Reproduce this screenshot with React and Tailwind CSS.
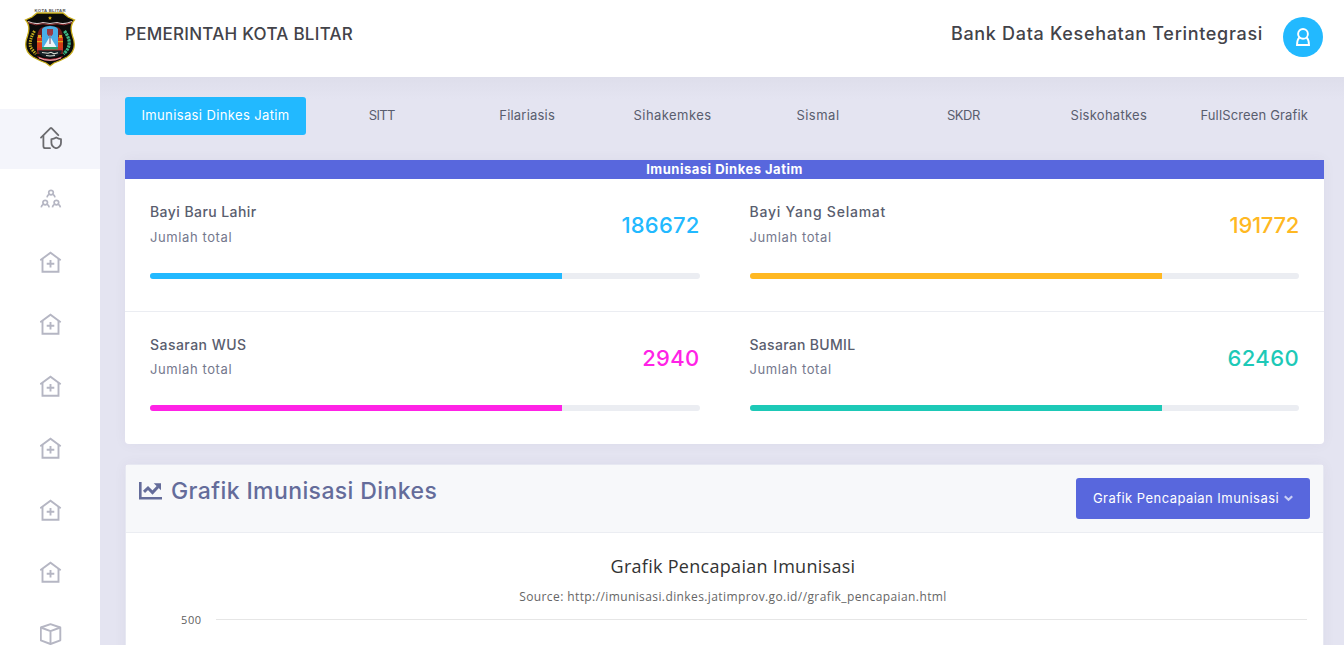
import React from 'react';

const HEADING = "font-['Inter',sans-serif]";

function Logo() {
  return (
    <svg viewBox="0 0 52 60" className="h-[60px] w-[52px]">
      <text x="26" y="3.800" textAnchor="middle" fontFamily="Liberation Sans, sans-serif" fontWeight="700" fontSize="4.3" fill="#555" textLength="31">KOTA BLITAR</text>
      <path d="M13 5 H39 L44 9 L50.500 12 Q45 18 48.500 28 Q54 42 43 49 Q36 53 30 55 L26 58 L22 55 Q16 53 9 49 Q-2 42 3.500 28 Q7 18 1.500 12 L8 9Z" fill="#0b0b0b" stroke="#c9ae1c" strokeWidth="1.300" />
      <path d="M26 8l.6 1.200 1.300.2-.9 1 .2 1.300-1.200-.6-1.200.6.2-1.300-.9-1 1.300-.2z" fill="#e0b414" />
      <path d="M4 13.500 Q12 17 19 14.500 L26 15.500 33 14.500 Q40 17 48 13.500" fill="none" stroke="#d9c9ca" strokeWidth="1.200" />
      <path d="M4 14.800 Q12 18.300 19 15.800 L26 16.800 33 15.800 Q40 18.300 48 14.800" fill="none" stroke="#b03a40" strokeWidth=".8" />
      <path d="M13 46V29q1-9 6-10h14q5 1 6 10v17z" fill="#6e1a1a" />
      <path d="M18 42V21q2-3 8-3t8 3v21z" fill="#4aaee6" />
      <path d="M19 40l6-10h2l6 10z" fill="#eef5f8" />
      <path d="M23 21h6v5l-1.500 2h-3L23 26z" fill="#9c3a43" />
      <path d="M25.300 27h1.400v9h-1.400z" fill="#8a7c96" />
      <path d="M13 29h5v11h-5zM34 29h5v11h-5z" fill="#d23c18" />
      <path d="M14 27h3v3h-3zM35 27h3v3h-3zM13 33h5v1.300h-5zM34 33h5v1.300h-5z" fill="#e2a51b" />
      <path d="M13 40h26v2.500H13z" fill="#c9322b" />
      <path d="M18 39h16v2.500H18z" fill="#2c9a68" />
      <path d="M14 42.500h24q-2 7-12 7t-12-7z" fill="#162026" />
      <path d="M18 44.500l6 .8 3-1 3 1.500 4-1M22 47.500l4 .5 5-.5" stroke="#d6d9d0" strokeWidth="1.100" fill="none" />
      <path d="M10.500 23Q5 32 6.500 39Q9 43 12 46" fill="none" stroke="#c6ac1c" strokeWidth="3" strokeDasharray="1.500 1" />
      <path d="M40.500 23Q47 32 44.500 39Q43 43 39.500 46" fill="none" stroke="#3bb583" strokeWidth="3.200" strokeDasharray="2.400 .7" />
      <path d="M13 48q13 6 26 0l-2 2.500q-11 5-22 0z" fill="#b32635" />
      <path d="M15 49.800q11 5 22 0" fill="none" stroke="#ead3d3" strokeWidth=".9" />
    </svg>
  );
}

function HomeShield() {
  return (
    <svg viewBox="0 0 22 22" className="-mt-0.5 size-[22px]" fill="none" stroke="#6b6b6f" strokeWidth="1.800" strokeLinecap="round" strokeLinejoin="round">
      <path d="M1 10.600 10.500 1.200 Q11 .8 11.500 1.200 L18.300 8.200" />
      <path d="M3.400 9v10.200q0 2 2 2H10" />
      <path d="M16.200 10.500q2.600 1.700 4.800 1.600v3.600q0 4-4.800 5.600-4.800-1.600-4.800-5.600v-3.600q2.200.1 4.800-1.600z" />
    </svg>
  );
}

function Person({ x, y }) {
  return (
    <g transform={`translate(${x} ${y})`}>
      <circle cx="0" cy="0" r="2.300" />
      <path d="M-4 4.800q.3-2.300 2.200-3.200M4 4.800q-.3-2.300-2.200-3.200" />
    </g>
  );
}

function People() {
  return (
    <svg viewBox="0 0 22 20" className="-mt-1 h-5 w-[22px]" fill="none" stroke="#b5b6c3" strokeWidth="1.700">
      <Person x="11" y="3.600" />
      <Person x="5.200" y="13.600" />
      <Person x="16.400" y="13.600" />
    </svg>
  );
}

function HomePlus() {
  return (
    <svg viewBox="0 0 22 22" className="-mt-0.5 size-[22px]" fill="none" stroke="#b5b6c3" strokeWidth="1.900">
      <path d="M.3 9.300 10.500 1.700l10.200 7.600" />
      <path d="M2.500 8v12.700h16V8M10.500 9v7.500M6.700 12.700h7.600" />
    </svg>
  );
}

function Box() {
  return (
    <svg viewBox="0 0 22 22" className="-mt-0.5 size-[22px]" fill="none" stroke="#b5b6c3" strokeWidth="1.900" strokeLinejoin="round">
      <path d="M10.500 1.200 20.300 4.500v12.800L10.500 21 .8 17.300V4.500z" />
      <path d="M.8 4.500 10.500 8.200l9.800-3.700M10.500 8.200V21" />
    </svg>
  );
}

function SideItem({ active, children }) {
  return (
    <a className={`flex h-[60px] shrink-0 items-center justify-center pl-0.5 ${active ? 'bg-[#f4f5fb]' : ''}`}>{children}</a>
  );
}

function Sidebar() {
  return (
    <nav className="flex w-[100px] shrink-0 flex-col gap-0.5 overflow-hidden bg-white pt-8">
      <SideItem active><HomeShield /></SideItem>
      <SideItem><People /></SideItem>
      {[0, 1, 2, 3, 4, 5].map((i) => <SideItem key={i}><HomePlus /></SideItem>)}
      <SideItem><Box /></SideItem>
    </nav>
  );
}

const tabs = [
  { label: 'SITT', spacing: 'tracking-[-0.7px]' },
  { label: 'Filariasis', spacing: 'tracking-[0.2px]' },
  { label: 'Sihakemkes', spacing: 'tracking-[0.45px]' },
  { label: 'Sismal', spacing: 'tracking-[0.5px]' },
  { label: 'SKDR', spacing: 'tracking-[-0.5px]' },
  { label: 'Siskohatkes', spacing: 'tracking-[0.27px]' },
  { label: 'FullScreen Grafik', spacing: 'tracking-[0.15px]' },
];

const stats = [
  { name: 'Bayi Baru Lahir', spacing: 'tracking-[0.43px]', value: '186672', text: 'text-[#22b9ff] tracking-[0.2px]', bar: 'bg-[#22b9ff]', cell: 'border-b', note: 'mt-[3px]' },
  { name: 'Bayi Yang Selamat', spacing: 'tracking-[0.77px]', value: '191772', text: 'text-[#ffb822] tracking-[-0.3px]', bar: 'bg-[#ffb822]', cell: 'border-b', note: 'mt-[3px]' },
  { name: 'Sasaran WUS', spacing: 'tracking-[0.47px]', value: '2940', text: 'text-[#ff22e6] tracking-[0.3px]', bar: 'bg-[#ff22e6]', cell: '', note: 'mt-[2px]' },
  { name: 'Sasaran BUMIL', spacing: 'tracking-[0.3px]', value: '62460', text: 'text-[#1dc9b7] tracking-[0.4px]', bar: 'bg-[#1dc9b7]', cell: '', note: 'mt-[2px]' },
];

function Stat({ name, spacing, value, text, bar, cell, note }) {
  return (
    <div className={`h-[133px] border-[#ebedf2] px-[25px] pt-[22px] ${cell}`}>
      <div className="flex items-start justify-between">
        <div>
          <h4 className={`text-[14px] leading-[22px] font-medium text-[#595d6e] ${spacing}`}>{name}</h4>
          <p className={`text-[13px] leading-[22px] tracking-[0.6px] text-[#74788d] ${note}`}>Jumlah total</p>
        </div>
        <span className={`mt-[6px] -mb-2 text-[22px] leading-[36px] font-medium ${text}`}>{value}</span>
      </div>
      <div className="mt-[25px] h-[6px] overflow-hidden rounded-[3px] bg-[#ebedf2]">
        <div className={`h-full w-3/4 ${bar}`} />
      </div>
    </div>
  );
}

export default function App() {
  return (
    <div className={`flex h-[645px] flex-col overflow-hidden bg-white ${HEADING}`}>
      <header className="flex h-[77px] shrink-0 items-start bg-white pr-[21px] text-[#434349]">
        <div className="flex w-[100px] justify-center pt-2"><Logo /></div>
        <h1 className="ml-[25px] mt-5 text-[17px] leading-7 font-medium tracking-[0.27px] whitespace-nowrap">PEMERINTAH KOTA BLITAR</h1>
        <div className="ml-auto mt-5 text-[18px] leading-7 font-medium tracking-[0.68px] whitespace-nowrap">Bank Data Kesehatan Terintegrasi</div>
        <div className="mt-[17px] ml-5 flex size-10 items-center justify-center rounded-full bg-[#22b9ff]">
          <svg viewBox="0 0 14 18" className="-mt-px -ml-px h-[18px] w-[14px]" fill="none" stroke="#fff" strokeWidth="1.900">
            <circle cx="7" cy="5.900" r="4.900" />
            <path d="M3.400 9.400Q1 12 1 17.050h12Q13 12 10.600 9.400" />
          </svg>
        </div>
      </header>
      <div className="flex min-h-0 flex-1">
        <Sidebar />
        <main className="min-w-0 flex-1 bg-[#e4e4f1] bg-[linear-gradient(to_bottom,#dedeeb,transparent_22px)] px-[25px] pt-5 pr-5">
          <div className="-mr-[3px] flex h-[38px] text-[13px] text-[#595d6e]">
            <a className="mr-[3px] flex w-[181px] shrink-0 items-center justify-center rounded-[3px] bg-[#22b9ff] tracking-[0.38px] text-white">Imunisasi Dinkes Jatim</a>
            {tabs.map((t) => (
              <a key={t.label} className={`flex min-w-0 flex-1 items-center justify-center whitespace-nowrap ${t.spacing}`}>{t.label}</a>
            ))}
          </div>
          <section className="mt-[25px] h-[284px] overflow-hidden rounded-b bg-white shadow-[0_0_13px_rgba(82,63,105,0.05)]">
            <h2 className="h-[19px] bg-[#5867dd] text-center text-[13px] leading-[19px] font-bold tracking-[0.5px] text-white">Imunisasi Dinkes Jatim</h2>
            <div className="grid grid-cols-2">
              {stats.map((s) => <Stat key={s.name} {...s} />)}
            </div>
          </section>
          <section className="mt-5 h-[300px] rounded border border-[#e7e8f2] bg-white shadow-[0_0_13px_rgba(82,63,105,0.05)]">
            <div className="flex h-[68px] items-start justify-between border-b border-[#ebedf2] bg-[#f7f8fa] px-[13px] pt-[13px]">
              <h3 className="flex items-center text-[23px] leading-[27px] font-medium tracking-[0.4px] whitespace-nowrap text-[#646c9a]">
                <svg viewBox="0 0 23 18" className="-mt-0.5 mr-[9px] h-[18px] w-[23px]" fill="none" stroke="#646c9a" strokeWidth="3">
                  <path d="M1.300 0v16.300H23" strokeWidth="2.600" />
                  <path d="M5 9.800 9 6l4.500 4.500L19 4.800" />
                  <path d="M14.700 1.200H22v7z" fill="#646c9a" stroke="none" />
                </svg>
                Grafik Imunisasi Dinkes
              </h3>
              <button className="flex h-[41px] w-[234px] items-center justify-center gap-[5px] rounded-[3px] bg-[#5867dd] text-[13px] tracking-[0.46px] whitespace-nowrap text-white">
                <span>Grafik Pencapaian Imunisasi</span>
                <svg viewBox="0 0 9 7" className="h-[7px] w-[9px]" fill="none" stroke="#c9cef5" strokeWidth="2.200"><path d="M.8 1.200 4.500 4.800 8.200 1.200" /></svg>
              </button>
            </div>
            <div className="pt-5 pr-4 pl-[54px] font-['Open_Sans',sans-serif]">
              <div className="-ml-[21px] text-center text-[18px] leading-[26px] tracking-[0.29px] text-[#333]">Grafik Pencapaian Imunisasi</div>
              <div className="-ml-[21px] mt-[8px] text-center text-[12px] leading-[20px] tracking-[0.4px] text-[#666]">Source: http://imunisasi.dinkes.jatimprov.go.id//grafik_pencapaian.html</div>
              <div className="mt-[4px] flex items-center">
                <span className="pl-px pt-px text-[11px] leading-[16px] tracking-[0.6px] text-[#606060]">500</span>
                <span className="ml-auto h-px w-[1091px] bg-[#e6e6e6]" />
              </div>
            </div>
          </section>
        </main>
      </div>
    </div>
  );
}
